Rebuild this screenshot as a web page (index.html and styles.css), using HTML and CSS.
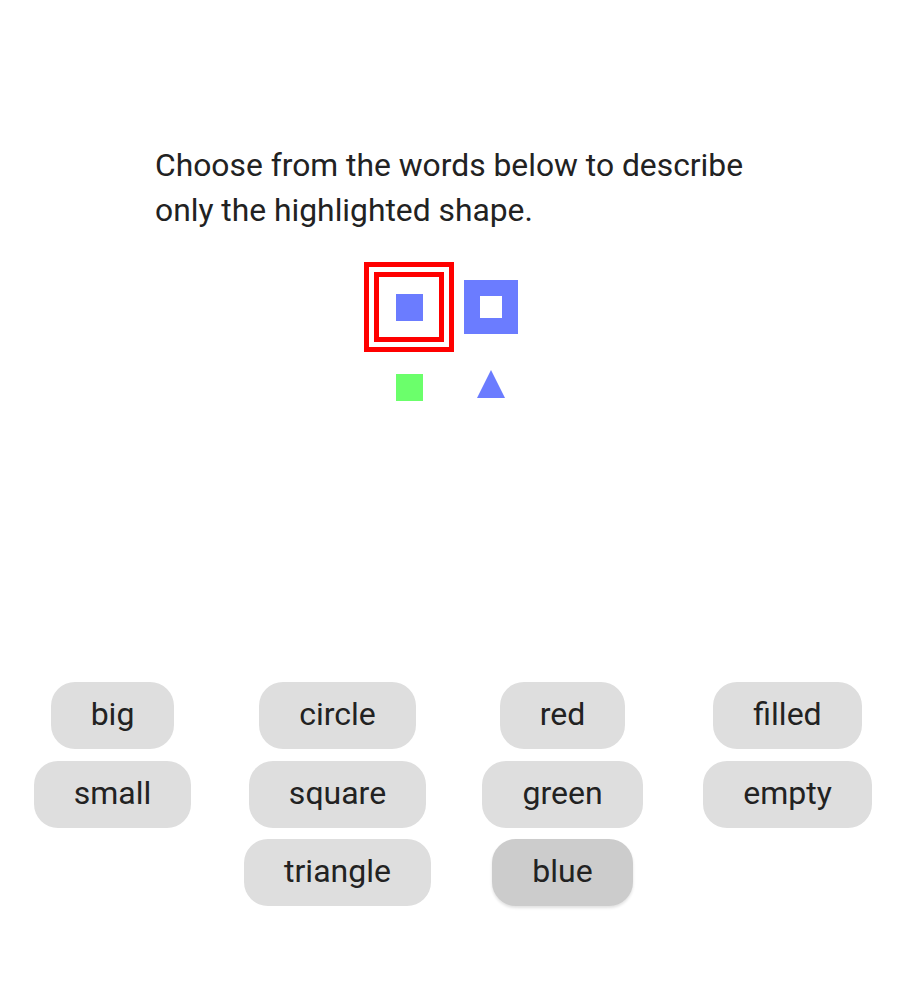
FILE: index.html
```html
<!DOCTYPE html>
<html lang="en">
<head>
<meta charset="utf-8">
<title>Describe the shape</title>
<link rel="stylesheet" href="styles.css">
</head>
<body>
<main class="page">
  <p class="prompt">Choose from the words below to describe only the highlighted shape.</p>
  <div class="shapes">
    <div class="cell">
      <span class="highlight"></span>
      <span class="sq-small blue"></span>
    </div>
    <div class="cell">
      <span class="sq-big-empty"></span>
    </div>
    <div class="cell">
      <span class="sq-small green"></span>
    </div>
    <div class="cell">
      <svg class="tri" width="28" height="28" viewBox="0 0 28 28"><polygon points="14,0 28,28 0,28" fill="#6b7cff"/></svg>
    </div>
  </div>
  <div class="options">
    <div class="col">
      <button class="word">big</button>
      <button class="word">small</button>
    </div>
    <div class="col">
      <button class="word">circle</button>
      <button class="word">square</button>
      <button class="word">triangle</button>
    </div>
    <div class="col">
      <button class="word">red</button>
      <button class="word">green</button>
      <button class="word active">blue</button>
    </div>
    <div class="col">
      <button class="word">filled</button>
      <button class="word">empty</button>
    </div>
  </div>
</main>
</body>
</html>
```
FILE: styles.css
```css
html, body {
  margin: 0;
  padding: 0;
  background: #ffffff;
}
body {
  font-family: Roboto, "Liberation Sans", sans-serif;
  color: #222222;
}
.page {
  width: 900px;
  height: 1000px;
  padding-top: 143px;
  box-sizing: border-box;
}
.prompt {
  width: 600px;
  margin: 0 auto 0 155px;
  font-size: 31.8px;
  line-height: 45px;
}
.shapes {
  margin: 34px auto 0;
  width: 164px;
  display: grid;
  grid-template-columns: 82px 82px;
  grid-template-rows: 80px 80px;
}
.cell {
  position: relative;
  display: flex;
  align-items: center;
  justify-content: center;
}
.highlight {
  position: absolute;
  left: 50%;
  top: 50%;
  width: 90px;
  height: 90px;
  box-sizing: border-box;
  border: 15px double #ff0000;
  transform: translate(-50%, -50%);
}
.sq-small {
  width: 27px;
  height: 27px;
}
.blue { background: #6b7cff; }
.green { background: #6bff6b; }
.sq-big-empty {
  width: 54px;
  height: 54px;
  box-sizing: border-box;
  border: 16px solid #6b7cff;
  background: #ffffff;
}
.tri {
  display: block;
  margin-top: -6px;
}
.options {
  margin-top: 255px;
  display: grid;
  grid-template-columns: repeat(4, 225px);
}
.col {
  display: flex;
  flex-direction: column;
  align-items: center;
  gap: 11.5px;
}
.word {
  font-family: Roboto, "Liberation Sans", sans-serif;
  font-size: 32px;
  color: #222222;
  height: 67px;
  padding: 0 40px 3px;
  border: none;
  border-radius: 24px;
  background: #dedede;
}
.word.active {
  background: #cccccc;
  box-shadow: 0 2px 3px rgba(0, 0, 0, 0.12);
}
```
